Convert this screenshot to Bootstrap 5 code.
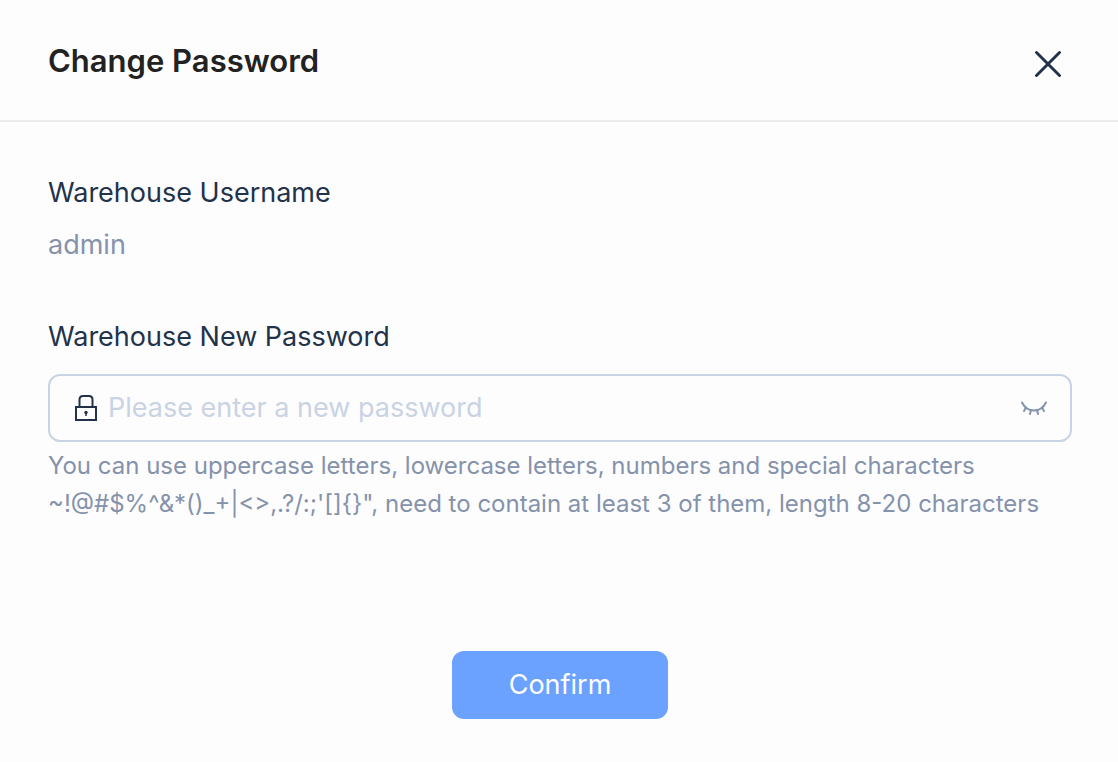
<!DOCTYPE html>
<html lang="en">
<head>
<meta charset="utf-8">
<meta name="viewport" content="width=device-width, initial-scale=1">
<title>Change Password</title>
<link href="https://cdn.jsdelivr.net/npm/bootstrap@5.3.0/dist/css/bootstrap.min.css" rel="stylesheet">
<style>
  body { font-family: Inter, "Liberation Sans", sans-serif; background: #fdfdfd; color: #22324a; }
  .dialog-head { padding: 40px 46px 32px 48px; border-bottom: 2px solid #ebebeb; }
  .dialog-title { font-size: 31px; line-height: 42px; font-weight: 600; color: #222; }
  .close-btn { width: 48px; height: 48px; color: #22324a; }
  .dialog-body { padding: 48px 46px 40px 48px; }
  .field-label, .field-value { font-size: 27px; line-height: 46px; }
  .field-value { margin: 6px 0 46px; color: #8592ab; }
  .password-box { height: 68px; margin-top: 14px; border: 2px solid #c9d3e4; border-radius: 12px; padding: 0 22px 0 24px; }
  .password-box .form-control { margin: 0 10px; font-size: 27px; line-height: 40px; color: #22324a; box-shadow: none; }
  .password-box .form-control::placeholder { color: #c9d3e4; }
  .toggle-btn { color: #8592ab; }
  .hint { margin: 5px 0 128px; font-size: 24px; line-height: 38px; color: #8592ab; }
  .confirm-btn, .confirm-btn:hover { width: 216px; height: 68px; font-size: 27px; border-radius: 12px; background: #6ba1ff; color: #fff; }
</style>
</head>
<body>
<main>
  <header class="dialog-head d-flex justify-content-between align-items-start">
    <h1 class="dialog-title mb-0">Change Password</h1>
    <button type="button" class="close-btn btn border-0 p-0 d-flex align-items-center justify-content-center" aria-label="Close">
      <svg width="28" height="28" viewBox="0 0 28 28" fill="none" stroke="currentColor" stroke-width="3" stroke-linecap="round"><path d="M2.5 2.5l23 23M25.5 2.5l-23 23"/></svg>
    </button>
  </header>
  <form class="dialog-body">
    <div class="field-label">Warehouse Username</div>
    <div class="field-value">admin</div>
    <label class="field-label d-block" for="newPassword">Warehouse New Password</label>
    <div class="password-box d-flex align-items-center">
      <svg class="flex-shrink-0" width="24" height="28" viewBox="0 0 24 28" fill="none" stroke="currentColor" stroke-width="2" aria-hidden="true">
        <path d="M2 13h20v13H2z"/>
        <path d="M5.5 13V5.500Q5.500 2 9 2h6q3.500 0 3.500 3.500V13"/>
        <circle cx="12" cy="18.500" r="1.700" fill="currentColor" stroke="none"/>
        <path d="M12 18.500v3.500" stroke-width="1.500"/>
      </svg>
      <input id="newPassword" type="password" class="form-control border-0 bg-transparent p-0" placeholder="Please enter a new password" aria-describedby="passwordHint">
      <button type="button" class="toggle-btn btn border-0 p-0 d-flex flex-shrink-0" aria-label="Show password">
        <svg width="28" height="28" viewBox="0 0 28 28" fill="none" stroke="currentColor" stroke-width="2" stroke-linecap="round"><path d="M2 8.500Q6 16.500 14 16.500T26 8.500M6 13.500l-2 3.500M11 16l-1 4M17 16l1 4M22 13.500l2 3.500"/></svg>
      </button>
    </div>
    <p id="passwordHint" class="hint">You can use uppercase letters, lowercase letters, numbers and special characters ~!@#$%^&amp;*()_+|&lt;&gt;,.?/:;'[]{}", need to contain at least 3 of them, length 8-20 characters</p>
    <div class="d-flex justify-content-center">
      <button type="submit" class="confirm-btn btn border-0 p-0">Confirm</button>
    </div>
  </form>
</main>
<script src="https://cdn.jsdelivr.net/npm/bootstrap@5.3.0/dist/js/bootstrap.bundle.min.js"></script>
</body>
</html>
